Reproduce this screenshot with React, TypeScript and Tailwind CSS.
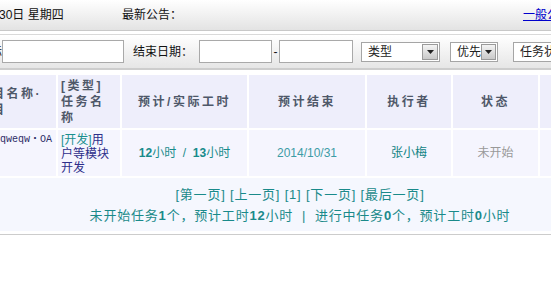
import React from "react";

const FONT = "font-['Liberation_Sans','Noto_Sans_CJK_SC',sans-serif]";

// Header cell
const Th = ({ children, className = "" }: { children: React.ReactNode; className?: string }) => (
  <div
    className={`bg-[#eeeefb] flex items-center text-[12px] font-bold tracking-[2.5px] text-[#4e5869] leading-[16px] ${className}`}
  >
    {children}
  </div>
);

const Td = ({ children, className = "" }: { children: React.ReactNode; className?: string }) => (
  <div className={`bg-[#f5f5fe] flex text-[12px] ${className}`}>{children}</div>
);

const SelectBox = ({ label, width }: { label: string; width: string }) => (
  <div
    className={`${width} h-[20px] bg-white border border-[#a5a5a5] flex items-center justify-between pl-[6px] pr-[1px] text-[12px] text-[#222] shrink-0`}
  >
    <span>{label}</span>
    <span className="w-[16px] h-[16px] bg-gradient-to-b from-[#f4f4f4] to-[#c9c9c9] border border-[#9a9a9a] flex items-center justify-center">
      <svg width="7" height="4" viewBox="0 0 7 4">
        <path d="M0 0h7L3.5 4z" fill="#222" />
      </svg>
    </span>
  </div>
);

export default function App() {
  return (
    <div className={`w-[551px] h-[283px] overflow-hidden bg-white ${FONT}`}>
      {/* Top bar */}
      <div className="h-[31px] bg-gradient-to-b from-white to-[#e3e3e3] border-b border-[#c8c8c8] flex items-center whitespace-nowrap text-[12px] text-[#111]">
        <span className="-ml-[1px] w-[123px] shrink-0">30日 星期四</span>
        <span>最新公告：</span>
        <a href="#" className="ml-auto -mr-[20px] text-[#0000cc] underline">一般公告</a>
      </div>

      {/* Filter bar */}
      <div className="mt-[3px] h-[36px] border-t border-[#d9d9d9] border-b-2 border-b-[#cdcdcd] bg-gradient-to-b from-white to-[#e6e6e6] flex items-center whitespace-nowrap text-[12px] text-[#111] overflow-hidden">
        <span className="-ml-[10px] shrink-0">际</span>
        <input className="w-[122px] h-[23px] bg-white border border-[#a9a9a9] shrink-0 outline-none" />
        <span className="ml-[9px] w-[66px] shrink-0">结束日期：</span>
        <input className="w-[73px] h-[23px] bg-white border border-[#a9a9a9] shrink-0 outline-none" />
        <span className="w-[7px] text-center shrink-0">-</span>
        <input className="w-[74px] h-[23px] bg-white border border-[#a9a9a9] shrink-0 outline-none" />
        <div className="ml-[8px]">
          <SelectBox label="类型" width="w-[79px]" />
        </div>
        <div className="ml-[10px]">
          <SelectBox label="优先" width="w-[48px]" />
        </div>
        <div className="ml-[15px]">
          <SelectBox label="任务状态" width="w-[80px]" />
        </div>
      </div>

      {/* Task table */}
      <div className="mt-[5px] w-[600px] grid grid-cols-[56px_62px_125px_116px_84px_85px_60px] gap-[2px] grid-rows-[53px_46px_53px]">
        <Th className="overflow-hidden">
          <span className="-ml-[8px] whitespace-nowrap">
            目名称·<br />目
          </span>
        </Th>
        <Th className="pl-[3px]">
          <span>
            [类型]<br />任务名<br />称
          </span>
        </Th>
        <Th className="justify-center">预计/实际工时</Th>
        <Th className="justify-center">预计结束</Th>
        <Th className="justify-center">执行者</Th>
        <Th className="justify-center">状态</Th>
        <Th className="justify-center">操作</Th>

        <Td className="pt-[3px] overflow-hidden">
          <span className="font-['Liberation_Mono','Noto_Sans_CJK_SC',monospace] text-[10px] leading-[14px] text-[#2c2c66] whitespace-nowrap">
            qweqw・OA
          </span>
        </Td>
        <Td className="pt-[3px] pl-[3px] leading-[14px]">
          <span>
            <span className="text-[#1a8f8f]">[开发]</span>
            <span className="text-[#2e2e8a]">用</span>
            <br />
            <span className="text-[#2e2e8a]">户等模块</span>
            <br />
            <span className="text-[#2e2e8a]">开发</span>
          </span>
        </Td>
        <Td className="items-center justify-center text-[#178b8b] whitespace-pre">
          <b>12</b>小时  /  <b>13</b>小时
        </Td>
        <Td className="items-center justify-center text-[#3d9ca6]">2014/10/31</Td>
        <Td className="items-center justify-center text-[#108383]">张小梅</Td>
        <Td className="items-center justify-center text-[#999]">未开始</Td>
        <Td className="items-center justify-center text-[#108383]">&nbsp;</Td>

        <div className="col-span-7 bg-[#f5f7fe] flex flex-col items-center justify-center text-[#1a8a8a] text-[13px] tracking-[0.8px] leading-[21px] whitespace-nowrap">
          <div>[第一页] [上一页] [1] [下一页] [最后一页]</div>
          <div>
            未开始任务<b>1</b>个，预计工时<b>12</b>小时&nbsp;&nbsp;|&nbsp;&nbsp;进行中任务<b>0</b>个，预计工时<b>0</b>小时
          </div>
        </div>
      </div>
      <div className="mt-[3px] border-t border-[#cccccc]" />
    </div>
  );
}
